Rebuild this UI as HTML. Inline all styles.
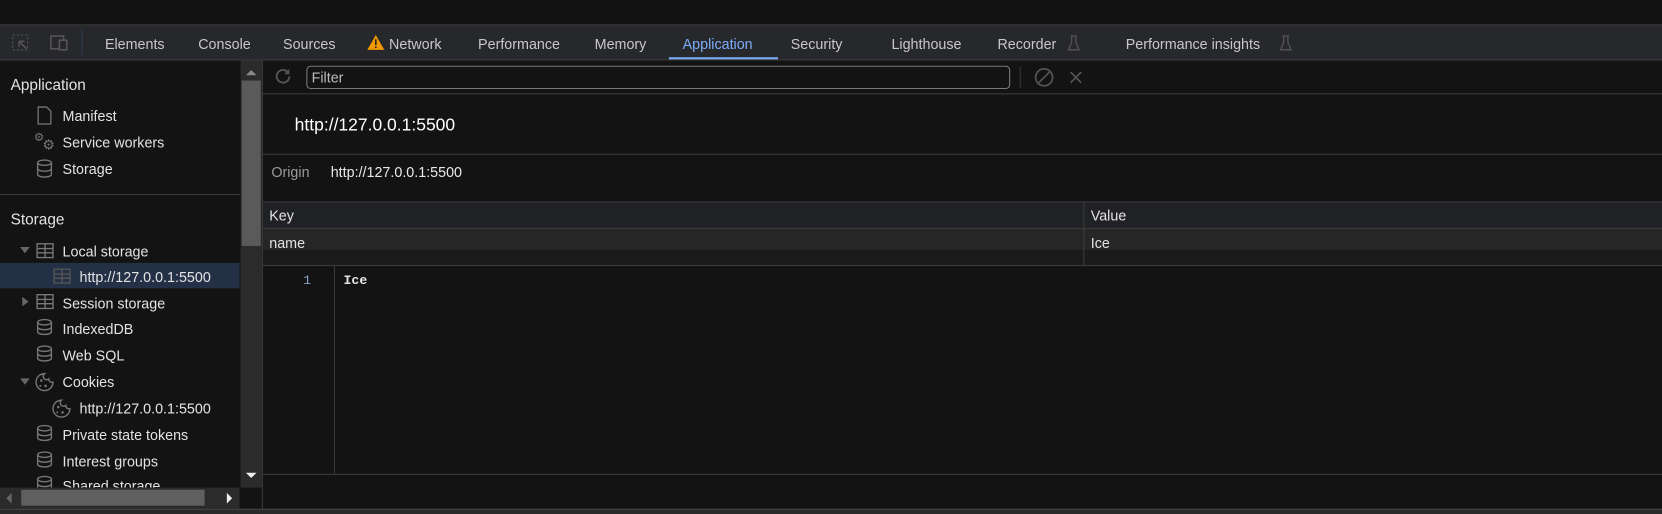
<!DOCTYPE html>
<html><head><meta charset="utf-8"><style>
html,body{margin:0;padding:0;background:#131313;overflow:hidden;width:1662px;height:513px}
#w{position:absolute;left:0;top:0;width:1568px;height:484px;transform:scale(1.06);transform-origin:0 0;font-family:"Liberation Sans",sans-serif;color:#e3e3e3;font-size:13.5px}
.a{position:absolute;white-space:nowrap}
.tab{position:absolute;top:34px;color:#c8c8c8;font-size:13.5px}
.si{position:absolute;font-size:13.5px;color:#e3e3e3}
.ic{position:absolute}
</style></head><body><div id="w">
<div class="a" style="left:0;top:0;width:1568px;height:23px;background:#121212"></div>
<div class="a" style="left:0;top:23px;width:1568px;height:34px;background:#27282b;border-top:1px solid #3c3c3c;border-bottom:1px solid #3c3c3c;box-sizing:border-box"></div>
<svg class="ic" style="left:10px;top:31px" width="60" height="20"><rect x="2" y="2" width="14" height="14" fill="none" stroke="#555" stroke-dasharray="2 2"/><path d="M8 8 L15 15 M8 8 h5 M8 8 v5" stroke="#555" stroke-width="1.5"/><rect x="38" y="3" width="12" height="12" fill="none" stroke="#555" stroke-width="1.5"/><rect x="46" y="7" width="7" height="9" fill="#27282b" stroke="#555" stroke-width="1.5"/></svg>
<div class="a" style="left:77px;top:28px;width:1px;height:24px;background:#2f3d52"></div>
<div class="tab" style="left:99px">Elements</div>
<div class="tab" style="left:187px">Console</div>
<div class="tab" style="left:267px">Sources</div>
<svg class="ic" style="left:346px;top:32px" width="18" height="16"><path d="M8.5 1 L16.5 15 H0.5 Z" fill="#f29900"/><rect x="7.8" y="5" width="1.5" height="5.5" fill="#222"/><rect x="7.8" y="11.8" width="1.5" height="1.5" fill="#222"/></svg>
<div class="tab" style="left:367px">Network</div>
<div class="tab" style="left:451px">Performance</div>
<div class="tab" style="left:561px">Memory</div>
<div class="tab" style="left:644px;color:#7cacf8">Application</div>
<div class="a" style="left:631px;top:54px;width:103px;height:2px;background:#7cacf8"></div>
<div class="tab" style="left:746px">Security</div>
<div class="tab" style="left:841px">Lighthouse</div>
<div class="tab" style="left:941px">Recorder</div>
<div class="tab" style="left:1062px">Performance insights</div>
<svg class="ic" style="left:1007px;top:33px" width="12" height="15"><path d="M3 1h6M4 1v6L1 14h10L8 7V1" fill="none" stroke="#555" stroke-width="1.2"/></svg>
<svg class="ic" style="left:1207px;top:33px" width="12" height="15"><path d="M3 1h6M4 1v6L1 14h10L8 7V1" fill="none" stroke="#555" stroke-width="1.2"/></svg>

<!-- sidebar -->
<div class="si" style="left:10px;top:73px;font-size:14.5px">Application</div>
<svg class="ic" style="left:35px;top:100px" width="14" height="18"><path d="M1 1h8l4 4v12H1z" fill="none" stroke="#777" stroke-width="1.2"/></svg>
<div class="si" style="left:59px;top:102px">Manifest</div>
<div class="a" style="left:32px;top:123px;color:#777;font-size:11px">⚙</div><div class="a" style="left:40px;top:129px;color:#777;font-size:13px">⚙</div>
<div class="si" style="left:59px;top:127px">Service workers</div>
<svg class="ic" style="left:34px;top:150px" width="16" height="18"><ellipse cx="8" cy="3.5" rx="6.5" ry="2.5" fill="none" stroke="#777" stroke-width="1.3"/><path d="M1.5 3.5v11c0 1.5 3 2.5 6.5 2.5s6.5-1 6.5-2.5v-11M1.5 9c0 1.5 3 2.5 6.5 2.5s6.5-1 6.5-2.5" fill="none" stroke="#777" stroke-width="1.3"/></svg>
<div class="si" style="left:59px;top:152px">Storage</div>
<div class="a" style="left:0;top:183px;width:226px;height:1px;background:#3c3c3c"></div>
<div class="si" style="left:10px;top:200px;font-size:14.5px">Storage</div>
<div class="a" style="left:0;top:248px;width:226px;height:24px;background:#233046"></div>
<svg class="ic" style="left:0;top:226px" width="226" height="240">
<g fill="#666"><path d="M19 7h9l-4.5 6z"/><path d="M21 54v9l6-4.5z"/><path d="M19 131h9l-4.5 6z"/></g>
<g fill="none" stroke="#777" stroke-width="1.3">
<rect x="35" y="4" width="15" height="13"/><path d="M35 8.5h15M35 12.5h15M42.5 4v13"/>
<rect x="51" y="28" width="15" height="13" stroke="#555"/><path d="M51 32.5h15M51 36.5h15M58.5 28v13" stroke="#555"/>
<rect x="35" y="52" width="15" height="13"/><path d="M35 56.5h15M35 60.5h15M42.5 52v13"/>
</g>
<g fill="none" stroke="#777" stroke-width="1.3" id="db">
<ellipse cx="42" cy="78" rx="6.5" ry="2.5"/><path d="M35.5 78v9c0 1.5 3 2.5 6.5 2.5s6.5-1 6.5-2.5v-9M35.5 82.5c0 1.5 3 2.5 6.5 2.5s6.5-1 6.5-2.5"/>
</g>
<use href="#db" y="25"/><use href="#db" y="100"/><use href="#db" y="125"/><use href="#db" y="148"/>
<g fill="none" stroke="#777" stroke-width="1.3"><path d="M42 126.5a8 8 0 1 0 8 8a3 3 0 0 1-4-3a3 3 0 0 1-4-5z"/>
<path d="M58 151.5a8 8 0 1 0 8 8a3 3 0 0 1-4-3a3 3 0 0 1-4-5z"/></g>
<g fill="#777"><circle cx="39" cy="133" r="1.2"/><circle cx="43" cy="138" r="1.2"/><circle cx="38" cy="138" r="0.9"/>
<circle cx="55" cy="158" r="1.2"/><circle cx="59" cy="163" r="1.2"/><circle cx="54" cy="163" r="0.9"/></g>
</svg>
<div class="si" style="left:59px;top:230px">Local storage</div>
<div class="si" style="left:75px;top:254px">http://127.0.0.1:5500</div>
<div class="si" style="left:59px;top:279px">Session storage</div>
<div class="si" style="left:59px;top:303px">IndexedDB</div>
<div class="si" style="left:59px;top:328px">Web SQL</div>
<div class="si" style="left:59px;top:353px">Cookies</div>
<div class="si" style="left:75px;top:378px">http://127.0.0.1:5500</div>
<div class="si" style="left:59px;top:403px">Private state tokens</div>
<div class="si" style="left:59px;top:428px">Interest groups</div>
<div class="a" style="left:0;top:450px;width:226px;height:10px;overflow:hidden"><div class="si" style="left:59px;top:1px">Shared storage</div></div>
<div class="a" style="left:0;top:460px;width:226px;height:20px;background:#2b2b2b"></div>
<div class="a" style="left:20px;top:462px;width:173px;height:15px;background:#5f5f5f"></div>
<svg class="ic" style="left:0;top:460px" width="226" height="20"><path d="M11 5v10l-5-5z" fill="#666"/><path d="M214 5v10l5-5z" fill="#eee"/></svg>
<div class="a" style="left:227px;top:57px;width:20px;height:403px;background:#2b2b2b"></div>
<div class="a" style="left:228px;top:76px;width:18px;height:156px;background:#5a5a5a"></div>
<svg class="ic" style="left:227px;top:60px" width="20" height="400"><path d="M5 11h10l-5-5z" fill="#888"/><path d="M5 386h10l-5 5z" fill="#eee"/></svg>
<div class="a" style="left:247px;top:57px;width:1px;height:427px;background:#3c3c3c"></div>

<!-- main -->
<svg class="ic" style="left:258px;top:63px" width="20" height="20"><path d="M15 9a6 6 0 1 1-2-4.5" fill="none" stroke="#555" stroke-width="1.8"/><path d="M15 2v5h-5z" fill="#555"/></svg>
<div class="a" style="left:289px;top:62px;width:664px;height:22px;border:1px solid #7a7a7a;border-radius:4px;box-sizing:border-box"></div>
<div class="a" style="left:294px;top:66px;color:#bbb">Filter</div>
<div class="a" style="left:962px;top:63px;width:1px;height:20px;background:#333"></div>
<svg class="ic" style="left:975px;top:63px" width="50" height="20"><circle cx="10" cy="10" r="8" fill="none" stroke="#555" stroke-width="1.6"/><path d="M5 15L15 5" stroke="#555" stroke-width="1.6"/><path d="M35 5l10 10M45 5L35 15" stroke="#555" stroke-width="1.6"/></svg>
<div class="a" style="left:248px;top:88px;width:1320px;height:1px;background:#3c3c3c"></div>
<div class="a" style="left:278px;top:109px;font-size:16.5px;color:#fff">http://127.0.0.1:5500</div>
<div class="a" style="left:248px;top:145px;width:1320px;height:1px;background:#3c3c3c"></div>
<div class="a" style="left:256px;top:155px;color:#9a9a9a">Origin</div>
<div class="a" style="left:312px;top:155px;color:#e8e8e8">http://127.0.0.1:5500</div>
<div class="a" style="left:248px;top:190px;width:1320px;height:26px;background:#202124;border-top:1px solid #3c3c3c;border-bottom:1px solid #3c3c3c;box-sizing:border-box"></div>
<div class="a" style="left:248px;top:216px;width:1320px;height:20px;background:#262626"></div>
<div class="a" style="left:248px;top:236px;width:1320px;height:15px;background:#1b1b1b"></div>
<div class="a" style="left:1022px;top:190px;width:1px;height:61px;background:#3c3c3c"></div>
<div class="a" style="left:248px;top:250px;width:1320px;height:1px;background:#3c3c3c"></div>
<div class="a" style="left:254px;top:196px">Key</div>
<div class="a" style="left:1029px;top:196px">Value</div>
<div class="a" style="left:254px;top:222px">name</div>
<div class="a" style="left:1029px;top:222px">Ice</div>
<div class="a" style="left:286px;top:258px;color:#8aa3c4;font-family:'Liberation Mono',monospace;font-size:12.5px">1</div>
<div class="a" style="left:315px;top:251px;width:1px;height:196px;background:#3c3c3c"></div>
<div class="a" style="left:324px;top:258px;color:#e3e3e3;font-family:'Liberation Mono',monospace;font-size:12.5px;font-weight:bold">Ice</div>
<div class="a" style="left:248px;top:447px;width:1320px;height:1px;background:#3c3c3c"></div>
<div class="a" style="left:0;top:480px;width:1568px;height:4px;background:#2a2a2a;border-top:1px solid #444"></div>
</div></body></html>
